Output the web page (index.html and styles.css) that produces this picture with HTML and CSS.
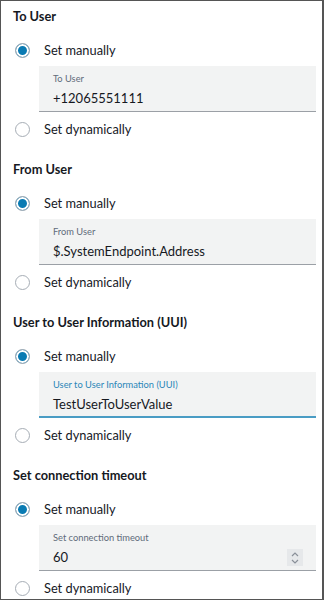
FILE: index.html
```html
<!DOCTYPE html>
<html lang="en">

<head>
    <meta charset="UTF-8">
    <meta name="viewport" content="width=device-width, initial-scale=1.0">
    <title>Call properties</title>
    <link rel="stylesheet" href="styles.css">
</head>

<body>
    <div class="panel">
        <div class="section">
            <h2 class="title">To User</h2>
            <label class="option"><span class="radio checked"></span>Set manually</label>
            <div class="field">
                <span class="field-label">To User</span>
                <span class="field-value">+12065551111</span>
            </div>
            <label class="option"><span class="radio"></span>Set dynamically</label>
        </div>

        <div class="section">
            <h2 class="title">From User</h2>
            <label class="option"><span class="radio checked"></span>Set manually</label>
            <div class="field">
                <span class="field-label">From User</span>
                <span class="field-value">$.SystemEndpoint.Address</span>
            </div>
            <label class="option"><span class="radio"></span>Set dynamically</label>
        </div>

        <div class="section">
            <h2 class="title">User to User Information (UUI)</h2>
            <label class="option"><span class="radio checked"></span>Set manually</label>
            <div class="field focus">
                <span class="field-label">User to User Information (UUI)</span>
                <span class="field-value">TestUserToUserValue</span>
            </div>
            <label class="option"><span class="radio"></span>Set dynamically</label>
        </div>

        <div class="section">
            <h2 class="title">Set connection timeout</h2>
            <label class="option"><span class="radio checked"></span>Set manually</label>
            <div class="field number">
                <span class="field-label">Set connection timeout</span>
                <span class="field-value">60</span>
                <span class="spinner">
                    <svg width="10" height="14" viewBox="0 0 10 14">
                        <path d="M2 5 L5 2 L8 5" fill="none" stroke="#8a9099" stroke-width="1.2"/>
                        <path d="M2 9 L5 12 L8 9" fill="none" stroke="#8a9099" stroke-width="1.2"/>
                    </svg>
                </span>
            </div>
            <label class="option"><span class="radio"></span>Set dynamically</label>
        </div>
    </div>
</body>

</html>
```

FILE: styles.css
```css
*{
    margin: 0;
    padding: 0;
    box-sizing: border-box;
}
body{
    background-color: #fff;
    font-family: Lato, "Noto Sans", sans-serif;
    color: #16191f;
}
.panel{
    width: 324px;
    height: 600px;
    border: 1px solid #555;
    border-right-width: 2px;
    padding: 5px 6px 0 12px;
    overflow: hidden;
}
.section{
    display: flex;
    flex-direction: column;
    margin-bottom: 18px;
}
.title{
    font-size: 12.8px;
    font-weight: 700;
    line-height: 20px;
    margin-bottom: 12px;
}
.option{
    display: flex;
    align-items: center;
    gap: 14px;
    height: 24px;
    padding-left: 2px;
    font-size: 12.8px;
}
.radio{
    width: 15px;
    height: 15px;
    border-radius: 50%;
    border: 1.5px solid #a6adb5;
    background-color: #fff;
    flex-shrink: 0;
}
.radio.checked{
    background-color: #0a7bb3;
    box-shadow: inset 0 0 0 2px #fff;
}
.field{
    position: relative;
    display: flex;
    flex-direction: column;
    margin: 4px 0 5px 26px;
    height: 46px;
    padding: 6px 14px 0;
    background-color: #f2f3f3;
    border-bottom: 1px solid #9ba0a6;
}
.field-label{
    font-size: 9.3px;
    line-height: 14px;
    color: #5f6b7a;
}
.field-value{
    font-size: 13px;
    line-height: 20px;
    margin-top: 2px;
}
.focus{
    border-bottom: 2px solid #4a9cc4;
}
.focus .field-label{
    color: #2a86b8;
}
.spinner{
    position: absolute;
    right: 13px;
    top: 24px;
    width: 16px;
    height: 17px;
    background-color: #e6e8ea;
    display: flex;
    align-items: center;
    justify-content: center;
}
```
